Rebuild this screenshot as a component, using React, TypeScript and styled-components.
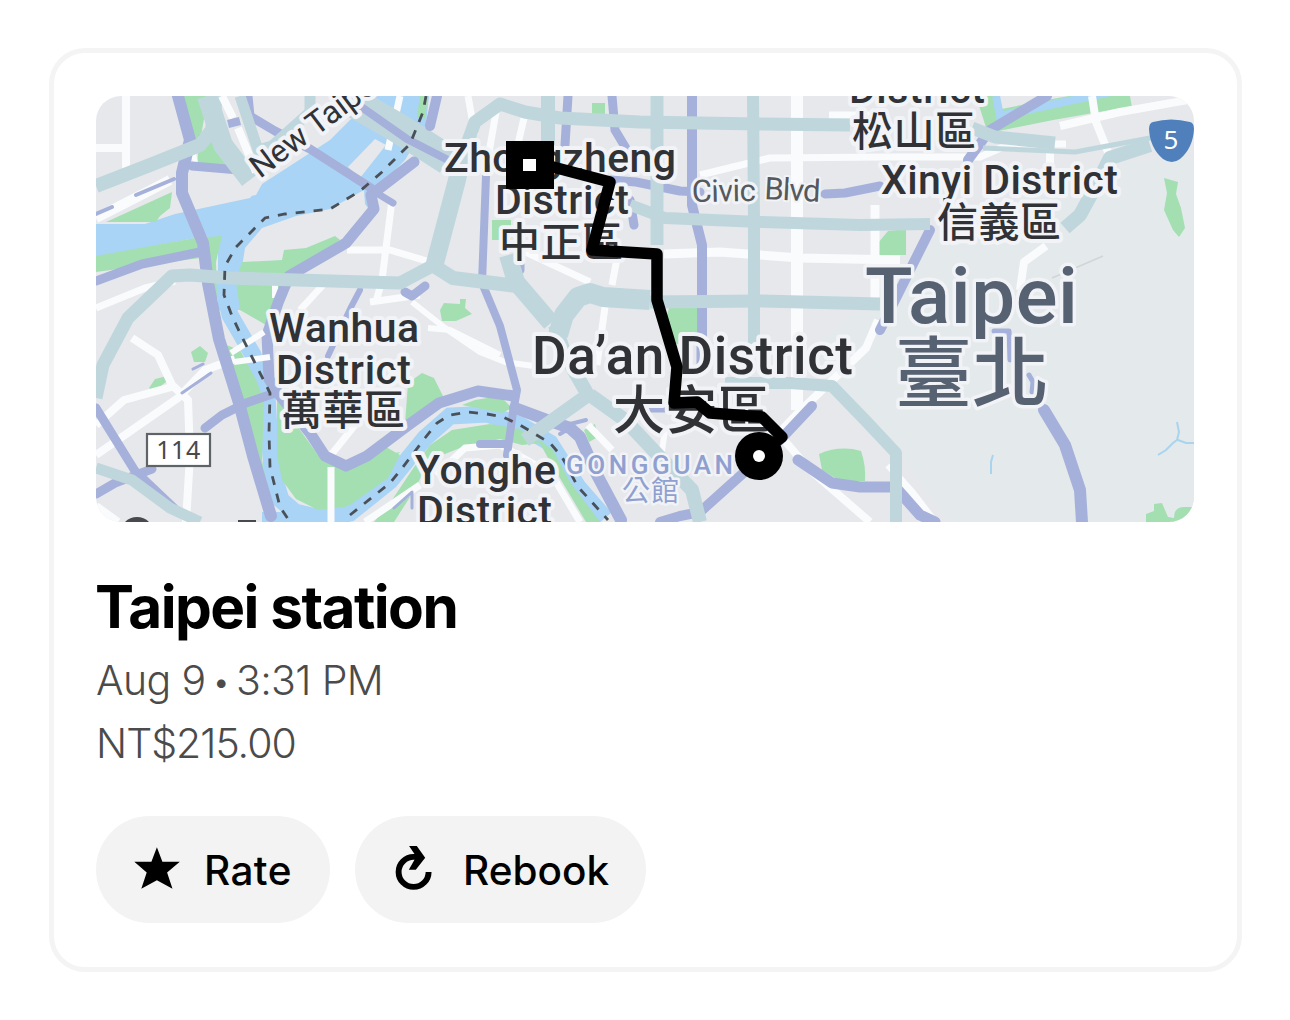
import React from "react";
import styled, { createGlobalStyle } from "styled-components";

const GlobalStyle = createGlobalStyle`
  * { box-sizing: border-box; }
  body { margin: 0; background: #fff; }
`;

const Page = styled.main`
  display: flex;
  width: 1290px;
  height: 1020px;
  padding: 48px 48px 48px 49px;
  font-family: Inter, "Liberation Sans", sans-serif;
`;

const Card = styled.article`
  display: flex;
  flex-direction: column;
  align-items: flex-start;
  width: 1193px;
  height: 924px;
  padding: 43px 42px;
  border: 5px solid #f4f4f4;
  border-radius: 36px;
`;

const MapFrame = styled.div`
  flex: none;
  width: 1098px;
  height: 426px;
  overflow: hidden;
  border-radius: 25px;
  svg { display: block; }
`;

const Title = styled.h1`
  margin: 51px 0 0 -1px;
  font-size: 58.5px;
  line-height: 68px;
  font-weight: 700;
  letter-spacing: -1.55px;
  color: #000;
  white-space: nowrap;
`;

const Detail = styled.p<{ $tracking: number; $top: number }>`
  margin: ${(p) => p.$top}px 0 0;
  font-size: 41px;
  line-height: 50px;
  font-weight: 350;
  letter-spacing: ${(p) => p.$tracking}px;
  color: #4b4b4b;
  white-space: nowrap;
`;

const Bullet = styled.span`
  margin: 0 -2px 0 -1.5px;
  font-size: 32px;
  line-height: 0;
  vertical-align: 2px;
`;

const Actions = styled.div`
  display: flex;
  gap: 25px;
  margin-top: 48px;
`;

const Pill = styled.button<{ $width: number }>`
  display: flex;
  align-items: center;
  width: ${(p) => p.$width}px;
  height: 107px;
  padding: 0 0 0 38px;
  border: 0;
  border-radius: 54px;
  background: #f3f3f3;
  color: #000;
  font-family: inherit;
  svg { margin-bottom: 3px; overflow: visible; }
`;

const PillLabel = styled.span<{ $gap: number; $tracking: number }>`
  margin-left: ${(p) => p.$gap}px;
  padding-top: 2px;
  font-size: 40.5px;
  line-height: 48px;
  font-weight: 500;
  letter-spacing: ${(p) => p.$tracking}px;
`;

const MapText = styled.text<{ $halo?: number }>`
  font-family: Roboto, "Noto Sans CJK TC", sans-serif;
  font-weight: 500;
  fill: #303236;
  stroke: #f1f3f7;
  stroke-width: ${(p) => p.$halo ?? 8}px;
  stroke-linejoin: round;
  paint-order: stroke;
`;

type LabelProps = {
  x: number;
  y: number;
  w: number;
  size: number;
  text: string;
  fill?: string;
  weight?: number;
  halo?: number;
  transform?: string;
};

const Label = ({ x, y, w, size, text, fill = "#303236", weight = 500, halo, transform }: LabelProps) => (
  <MapText
    x={x}
    y={y}
    textLength={w}
    $halo={halo}
    transform={transform}
    style={{ fontSize: size, fill, fontWeight: weight }}
  >
    {text}
  </MapText>
);

const GREEN = "#a4dfb2";
const WATER = "#a9d4f5";
const TEAL = "#bfd7dc";
const PURPLE = "#a5b1da";

const greens = [
  "M181 96H208L200 142H192Z",
  "M199 142L232 140L240 168L197 166Z",
  "M106 222L172 192L170 208L160 216L156 222Z",
  "M96 256L195 238L222 236L216 262L217 300L206 300L200 258L96 272Z",
  "M242 262L282 260L284 250L306 248L335 236L340 240L298 274L280 305L266 325L240 310L236 280Z",
  "M226 345L240 350L256 380L264 400L262 460L272 510L255 480L238 390Z",
  "M277 398L300 430L318 455L346 467L380 456L400 452L345 507L318 510L296 499L282 480L277 455Z",
  "M360 462L386 447L400 455L388 478L350 505L335 505Z",
  "M408 383L422 373L434 378L443 396L443 404L405 424Z",
  "M374 522L392 500L412 470L430 445L452 430L490 424L520 429L540 443L522 445L500 439L460 448L430 460L412 494L394 522Z",
  "M475 400L500 396L512 408L502 413L462 405Z",
  "M537 438L553 450L570 482L600 522H586L548 458Z",
  "M440 310L444 303L460 304V299H466L465 308L472 314L456 321H442Z",
  "M492 220H511V240H492Z",
  "M592 103H605V117H592Z",
  "M669 308H697V344H675L664 325Z",
  "M878 243L888 231L906 229V255H878Z",
  "M1164 178L1178 182L1176 194L1181 208L1185 228L1179 237L1173 230L1164 210L1167 193Z",
  "M819 454Q840 445 861 451Q866 465 865 481L840 481L822 470Z",
  "M1146 514L1154 511V504L1162 503L1168 517L1174 518Q1174 507 1184 507H1194V522H1146Z",
  "M191 352L200 346L208 353L205 362L194 362Z",
  "M149 388L155 379L167 376L166 382L153 392Z",
  "M584 430L595 424L598 437L589 442Z",
];

const whites: [string, number][] = [
  ["M126 96V168M96 148H126", 8],
  ["M96 308L145 288L175 281", 7],
  ["M96 218L145 193L170 180", 10],
  ["M193 152L196 165", 5],
  ["M96 455L178 398L205 370L235 359", 8],
  ["M96 425L124 400L175 386M132 338L158 355L172 385L188 400L190 455L186 522", 8],
  ["M96 506L118 522", 8],
  ["M275 285V298", 6],
  ["M331 455L355 425", 7],
  ["M300 310L323 285M347 250H390L430 262M370 302L420 295", 7],
  ["M392 200L382 280L376 302M400 96L388 150", 7],
  ["M412 302L445 328L480 352L505 362L534 366M428 328L450 330L480 345L500 355", 6],
  ["M468 96L475 135M496 112L486 170M524 118L512 170", 7],
  ["M521 250L590 282M618 253L612 285", 7],
  ["M797 96V410", 12],
  ["M700 175L770 158L885 157H980L1010 144H1066M829 115H870", 7],
  ["M664 254L720 252L800 258L900 260M875 205V300", 9],
  ["M878 320L866 348L796 415L780 432M784 440L810 470L870 522", 8],
  ["M1060 126L1120 112L1194 99M1092 96L1096 122L1108 152M1050 147V165", 8],
  ["M888 465L912 492L935 522", 7],
  ["M1046 246L1024 262L1020 290", 8],
  ["M605 307L597 365M588 425L612 450", 7],
  ["M665 430L660 465", 6],
  ["M552 475L580 522M436 475L465 448L500 445L545 470M365 522L420 485", 7],
];

const underTeals: [string, number][] = [
  ["M356 104L398 128L448 160", 30],
];

const teals: [string, number][] = [
  ["M96 186L150 165L200 145L212 130L216 96", 14],
  ["M207 96L223 145L250 180", 20],
  ["M240 96L258 150L272 146L310 112V96", 11],
  ["M96 398L103 365L128 318L172 276L190 275L230 278L400 283L434 265", 13],
  ["M434 267L457 180L463 150", 18],
  ["M463 155L475 122L500 104L525 112L560 118L640 122L760 124L850 125", 13],
  ["M434 266L453 278L517 286", 14],
  ["M508 255L516 282L551 323", 18],
  ["M558 335L564 315L578 297L590 293L603 297L650 300", 20],
  ["M650 302L760 301L880 304", 13],
  ["M548 96V145", 14],
  ["M657 96V245", 13],
  ["M753 96L754 220V344", 12],
  ["M630 205L665 218L760 222L860 225L930 224", 12],
  ["M972 128L995 137L1055 143", 13],
  ["M983 148L1075 152L1150 138L1184 143", 5],
  ["M1150 145L1110 158L1098 182L1080 215L1065 228", 14],
  ["M725 383L790 383L832 386L865 420L896 453V522", 12],
  ["M555 325L565 355L588 395L525 440M590 395L625 420L658 455L692 490L700 522", 14],
  ["M96 468L132 480L170 508L200 522", 11],
];

const purples: [string, number][] = [
  ["M178 96L190 140L182 173L182 193L203 243L208 283L219 339L239 403L253 456L271 516", 12],
  ["M96 281L142 264L200 252", 9],
  ["M192 166L239 170", 9],
  ["M202 138L220 131", 9],
  ["M136 195L174 179M96 214L112 207", 4],
  ["M248 96L250 116L275 131L310 149L371 188", 9],
  ["M414 162L371 195L374 209L346 243L289 276L278 303L267 335L269 379L278 393L310 433L325 456L346 466L367 456L407 426L439 403L478 391L514 396", 11],
  ["M375 192L393 203", 7],
  ["M350 99L407 139L448 160", 8],
  ["M437 96L430 126", 10],
  ["M360 290L350 309L328 356", 6],
  ["M486 176L482 283L500 326L517 390L513 412L507 455M480 444H505", 8],
  ["M405 292L412 296L425 286", 9],
  ["M568 96L565 145M612 96L615 130L630 155", 9],
  ["M520 270V250M630 200L634 225M610 180L636 182L680 191L700 192", 9],
  ["M692 96V205L702 245V344", 10],
  ["M825 194L845 193L880 186", 9],
  ["M1047 96L990 130L968 160M930 230L905 280L880 330", 10],
  ["M96 408L135 471L176 510M96 494L115 483L152 469M205 428L222 415L246 403L278 392", 9],
  ["M515 408L550 421L570 428L580 437L596 473L621 520", 12],
  ["M570 424L586 420M560 434L570 428", 4],
  ["M812 406L780 440L700 512L680 516L660 522", 10],
  ["M798 460L832 483L860 487H895L920 515L935 522", 11],
  ["M1044 410L1065 445L1080 490L1082 522", 12],
  ["M994 331H1009L1010 360M1029 375L1033 382L1032 392", 5],
  ["M182 393L211 373M193 369L203 364M394 508L412 492V508", 3],
  ["M700 345V365M650 409H675", 7],
];

const DistrictMap = () => (
  <svg width="1098" height="426" viewBox="96 96 1098 426" fill="none">
    <rect x="96" y="96" width="1098" height="426" fill="#e6e8ec" />
    <path d="M940 235L1060 170L1194 155V522H950L890 440L800 360Z" fill="#e4e9eb" />
    <path d="M96 224L145 224L175 214L250 198L262 184L330 140L358 112L358 96H429L426 125L405 160L371 195V212L365 204L364 190L330 209L296 216L262 228L245 248L240 280V310H218V245L206 236L96 257Z" fill={WATER} />
    <path d="M348 167L375 139L386 145L360 178Z" fill="#e6e8ec" />
    <path d="M192 182L240 172L262 184L256 195L210 203L186 200Z" fill="#e6e8ec" />
    <path d="M228 266L224 290L230 315L253 355L267 395L269 430L272 470L281 500L295 512L320 518L350 513L390 481L425 438L450 416L487 414L520 425L550 443L578 487L605 518" stroke={WATER} strokeWidth="17" />
    <path d="M262 512H350V522H262Z" fill={WATER} />
    <path d="M987 96L995 121L1050 110L1130 96" stroke={GREEN} strokeWidth="21" />
    <path d="M996 96L1000 116L1050 105L1120 90" stroke={WATER} strokeWidth="8" />
    {greens.map((d) => <path key={d} d={d} fill={GREEN} />)}
    <path d="M424 96L421 118" stroke={GREEN} strokeWidth="8" />
    {whites.map(([d, w]) => <path key={d} d={d} stroke="#fafbfc" strokeWidth={w} strokeLinejoin="round" />)}
    {underTeals.map(([d, w]) => <path key={d} d={d} stroke={TEAL} strokeWidth={w} strokeLinejoin="round" />)}
    {purples.map(([d, w]) => <path key={d} d={d} stroke={PURPLE} strokeWidth={w} strokeLinejoin="round" strokeLinecap="round" />)}
    {teals.map(([d, w]) => <path key={d} d={d} stroke={TEAL} strokeWidth={w} strokeLinejoin="round" />)}
    <path d="M222 96L233 118M238 128L256 172" stroke="#fafbfc" strokeWidth="8" />
    <path d="M228 124L240 121" stroke={PURPLE} strokeWidth="8" />
    <path d="M231 353L264 332M234 362L270 357" stroke="#fafbfc" strokeWidth="6" />
    <path d="M331 467V522" stroke="#fafbfc" strokeWidth="7" />
    <path d="M426 96L423 112L410 144L382 172L360 191L330 209L285 214L265 218L236 247L225 266L224 295L232 316L240 333L257 367L270 393L269 433L270 467L280 507L290 522M350 515L390 483L403 467L425 438L437 423L450 415L468 412L487 414L503 417L520 425L550 443L562 457L578 487L590 500L608 520" stroke="#4a5058" strokeWidth="2.8" strokeDasharray="9 9" />
    <path d="M1177 422L1179 432L1177 440L1173 443L1166 450L1158 455M1178 440L1186 443L1194 443M993 455L991 462V474" stroke="#a9d4ee" strokeWidth="2" />
    <path d="M1052 278L1103 256" stroke="#d2d5d8" strokeWidth="1.5" />
    <circle cx="137" cy="534" r="17" fill="#48494c" />
    <rect x="238" y="520" width="18" height="4" fill="#48494c" />

    <g transform="rotate(-37 260 179)">
      <Label x={260} y={179} w={155} size={32} text="New Taipei" weight={400} />
    </g>
    <Label x={444} y={172} w={232} size={41} text="Zhongzheng" />
    <Label x={495} y={214} w={134} size={41} text="District" />
    <Label x={499} y={257} w={124} size={41} text="中正區" />
    <Label x={849} y={103} w={136} size={41} text="District" />
    <Label x={852} y={146} w={124} size={41} text="松山區" />
    <Label x={881} y={194} w={237} size={41} text="Xinyi District" />
    <Label x={937} y={237} w={124} size={41} text="信義區" />
    <Label x={692} y={202} w={64} size={31} text="Civic" weight={400} fill="#55585d" halo={6} transform="rotate(-1 693 202)" />
    <Label x={764} y={199} w={56} size={31} text="Blvd" weight={400} fill="#55585d" halo={4} transform="rotate(3 764 199)" />
    <Label x={865} y={323} w={213} size={78} text="Taipei" fill="#566172" halo={7} />
    <Label x={895} y={401} w={154} size={77} text="臺北" fill="#566172" halo={7} />
    <Label x={532} y={374} w={321} size={53} text="Da’an District" />
    <Label x={613} y={429} w={157} size={52} text="大安區" />
    <Label x={269} y={342} w={150} size={41} text="Wanhua" />
    <Label x={276} y={384} w={135} size={41} text="District" />
    <Label x={281} y={425} w={124} size={41} text="萬華區" />
    <Label x={415} y={484} w={141} size={41} text="Yonghe" />
    <Label x={417} y={525} w={135} size={41} text="District" />
    <Label x={566} y={474} w={167} size={26} text="GONGGUAN" fill="#8fa0d0" halo={5} />
    <Label x={622} y={501} w={57} size={28} text="公館" fill="#8fa0d0" weight={400} halo={5} />

    <rect x="147" y="434" width="63" height="32" fill="#fff" stroke="#5f6368" strokeWidth="2.2" />
    <text x="178.5" y="459" textAnchor="middle" fontFamily="'Noto Sans', sans-serif" fontSize="25" letterSpacing="0.5" fill="#48494c">114</text>
    <path d="M1153 122Q1171 117 1190 122Q1194 123 1194 129Q1193 148 1180 159Q1172 165 1163 159Q1150 148 1149 129Q1149 123 1153 122Z" fill="#4f80bc" />
    <text x="1171" y="149" textAnchor="middle" fontFamily="'Noto Sans', sans-serif" fontSize="26" fill="#fff">5</text>

    <path d="M530 164L553 167L610 182L592 250L657 254V300L677 367L674 403L697 402L710 413L762 417L782 437L765 450" stroke="#000" strokeWidth="11.5" strokeLinejoin="round" />
    <rect x="506" y="141" width="48" height="48" fill="#000" />
    <rect x="523" y="159" width="13" height="12" fill="#fff" />
    <circle cx="759" cy="456" r="24" fill="#000" />
    <circle cx="759" cy="456" r="6" fill="#fff" />
  </svg>
);

const StarIcon = () => (
  <svg width="46" height="42" viewBox="134 848 46 42">
    <path d="M156.9 848.3L162.4 862.8H179.8L167.1 873.5L172.5 889.7L156.9 881.3L141.3 889.7L146.7 873.5L134.3 862.8H151.4Z" fill="#000" />
  </svg>
);

const RepeatIcon = () => (
  <svg width="37" height="46" viewBox="393.5 845 37 46">
    <path d="M416 856.9H414.1A15 15 0 1 0 429.1 871.9" fill="none" stroke="#000" strokeWidth="5.9" />
    <path d="M409.6 846H417.3L425.7 857.7L416.3 869.8H409.3L415 859.8V854Z" fill="#000" />
  </svg>
);

export default function App() {
  return (
    <Page>
      <GlobalStyle />
      <Card>
        <MapFrame>
          <DistrictMap />
        </MapFrame>
        <Title>Taipei station</Title>
        <Detail $top={14} $tracking={-0.65}>
          Aug 9<Bullet> • </Bullet>3:31 PM
        </Detail>
        <Detail $top={13} $tracking={-1}>NT$215.00</Detail>
        <Actions>
          <Pill $width={234}>
            <StarIcon />
            <PillLabel $gap={24} $tracking={0.4}>Rate</PillLabel>
          </Pill>
          <Pill $width={291}>
            <RepeatIcon />
            <PillLabel $gap={33} $tracking={0}>Rebook</PillLabel>
          </Pill>
        </Actions>
      </Card>
    </Page>
  );
}
